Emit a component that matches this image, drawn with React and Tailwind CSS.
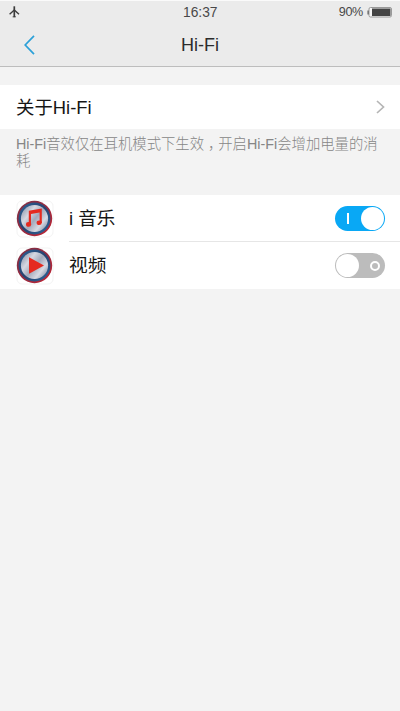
import React from 'react';

function StatusBar() {
  return (
    <div className="relative flex h-[22px] items-center justify-between pl-[9px] pr-[8px] text-[#484848]">
      <svg width="11" height="12" viewBox="0 0 11 12" fill="none" stroke="#3c3c3c">
        <path d="M5.3 0.3v10.9" strokeWidth="1.7" />
        <path d="M5.3 4L0.6 8.2M5.3 4l4.7 4.2" strokeWidth="1.4" />
        <path d="M3.6 10.8h3.4" strokeWidth="0.8" />
      </svg>
      <span className="absolute left-[183px] top-[4px] text-[13.8px] leading-4">16:37</span>
      <div className="flex items-center gap-[4px]">
        <span className="text-[12.6px] leading-4 tracking-[-0.3px]">90%</span>
        <svg width="25" height="11" viewBox="0 0 25 11">
          <path d="M2.5 3.5H0.5v4h2" fill="#555" />
          <rect x="2" y="0.5" width="22.5" height="9.5" rx="1.5" fill="#f5f5f5" stroke="#999" />
          <rect x="5" y="1.5" width="18.5" height="7.5" fill="#444" />
        </svg>
      </div>
    </div>
  );
}

function Header() {
  return (
    <header className="h-[67px] border-b border-t border-b-[#bdbdbd] border-t-[#fafafa] bg-[#ebebeb]">
      <StatusBar />
      <div className="relative flex h-[43px] items-center justify-center">
        <svg className="absolute left-[24px] top-[12px]" width="11" height="20" viewBox="0 0 11 20" fill="none" stroke="#2ba0d8" strokeWidth="1.7">
          <path d="M10 0.8L1.2 10l8.8 9.2" />
        </svg>
        <h1 className="text-[18px] leading-6 text-[#2c2c2c]">Hi-Fi</h1>
      </div>
    </header>
  );
}

function DiscIcon({ id, children }) {
  return (
    <svg className="shrink-0" width="38" height="38" viewBox="0 0 38 38">
      <defs>
        <linearGradient id={id + 'ring'} x1="0" y1="0" x2="1" y2="1">
          <stop offset="0" stopColor="#7d3044" />
          <stop offset="0.5" stopColor="#962a40" />
          <stop offset="1" stopColor="#c32533" />
        </linearGradient>
        <linearGradient id={id + 'blue'} x1="0" y1="0" x2="1" y2="1">
          <stop offset="0" stopColor="#2a6296" />
          <stop offset="0.5" stopColor="#28426f" />
          <stop offset="1" stopColor="#2b689c" />
        </linearGradient>
        <linearGradient id={id + 'metal'} x1="0" y1="0.1" x2="1" y2="0.9">
          <stop offset="0" stopColor="#8791a7" />
          <stop offset="0.3" stopColor="#d6d8e2" />
          <stop offset="0.52" stopColor="#a3a9bb" />
          <stop offset="0.75" stopColor="#d8dae3" />
          <stop offset="1" stopColor="#7c879e" />
        </linearGradient>
      </defs>
      <rect x="1" y="1" width="36" height="36" rx="5" fill="#fff" stroke="#f3f3f3" />
      <circle cx="18.5" cy="18.5" r="17.7" fill={`url(#${id}ring)`} />
      <circle cx="18.5" cy="18.5" r="15.9" fill={`url(#${id}blue)`} />
      <circle cx="18.5" cy="18.5" r="13.6" fill={`url(#${id}metal)`} />
      {children}
    </svg>
  );
}

function Toggle({ on }) {
  return on ? (
    <button className="flex h-[25px] w-[50px] shrink-0 items-center justify-between rounded-full bg-[#09a8f5] pl-[12px] pr-px" aria-label="i 音乐">
      <span className="h-[11px] w-[2px] bg-white" />
      <span className="size-[23px] rounded-full bg-white" />
    </button>
  ) : (
    <button className="flex h-[25px] w-[50px] shrink-0 items-center justify-between rounded-full bg-[#bcbcbc] pl-px pr-[5px]" aria-label="视频">
      <span className="size-[23px] rounded-full bg-white" />
      <span className="size-[10px] rounded-full border-2 border-white" />
    </button>
  );
}

export default function App() {
  return (
    <main className="h-[711px] w-[400px] overflow-hidden bg-[#f3f3f3] font-['Liberation_Sans','Noto_Sans_CJK_SC',sans-serif]">
      <Header />
      <section className="mt-[18px] flex h-[44px] items-center justify-between bg-white pl-4 pr-[15px]">
        <span className="pt-[2px] text-[18.4px] leading-6 text-[#161616]">关于Hi-Fi</span>
        <svg width="9" height="14" viewBox="0 0 9 14" fill="none" stroke="#b5b5b5" strokeWidth="1.7">
          <path d="M1 1l6.5 6L1 13" />
        </svg>
      </section>
      <p className="h-[66px] whitespace-nowrap pl-4 pt-[7px] text-[14.35px] font-light leading-[17px] text-[#868686]">
        Hi-Fi音效仅在耳机模式下生效<span className="pl-[4px] pr-[3px] [font-feature-settings:'halt']">，</span>开启Hi-Fi会增加电量的消
        <br />
        耗
      </p>
      <section className="bg-white">
        <div className="flex h-[47px] items-center pl-4">
          <DiscIcon id="music">
            <g fill="#e52a20">
              <path d="M12.8 10.8L25.8 8.4V23h-2.2V12.6l-8.6 1.5v10.5h-2.2z" />
              <ellipse cx="12.6" cy="24.4" rx="2.6" ry="2.3" />
              <ellipse cx="23.2" cy="22.7" rx="2.6" ry="2.3" />
            </g>
          </DiscIcon>
          <div className="ml-[15px] flex h-full flex-1 items-center justify-between border-b border-[#e6e6e6] pr-[15px]">
            <span className="pt-[2px] text-[18.5px] leading-6 text-[#161616]">i 音乐</span>
            <Toggle on />
          </div>
        </div>
        <div className="flex h-[47px] items-center pl-4">
          <DiscIcon id="video">
            <path d="M13 10.2l15 8.3-15 8.3z" fill="#e52a20" />
          </DiscIcon>
          <div className="ml-[15px] flex h-full flex-1 items-center justify-between pr-[15px]">
            <span className="text-[18.7px] leading-6 text-[#161616]">视频</span>
            <Toggle />
          </div>
        </div>
      </section>
    </main>
  );
}
